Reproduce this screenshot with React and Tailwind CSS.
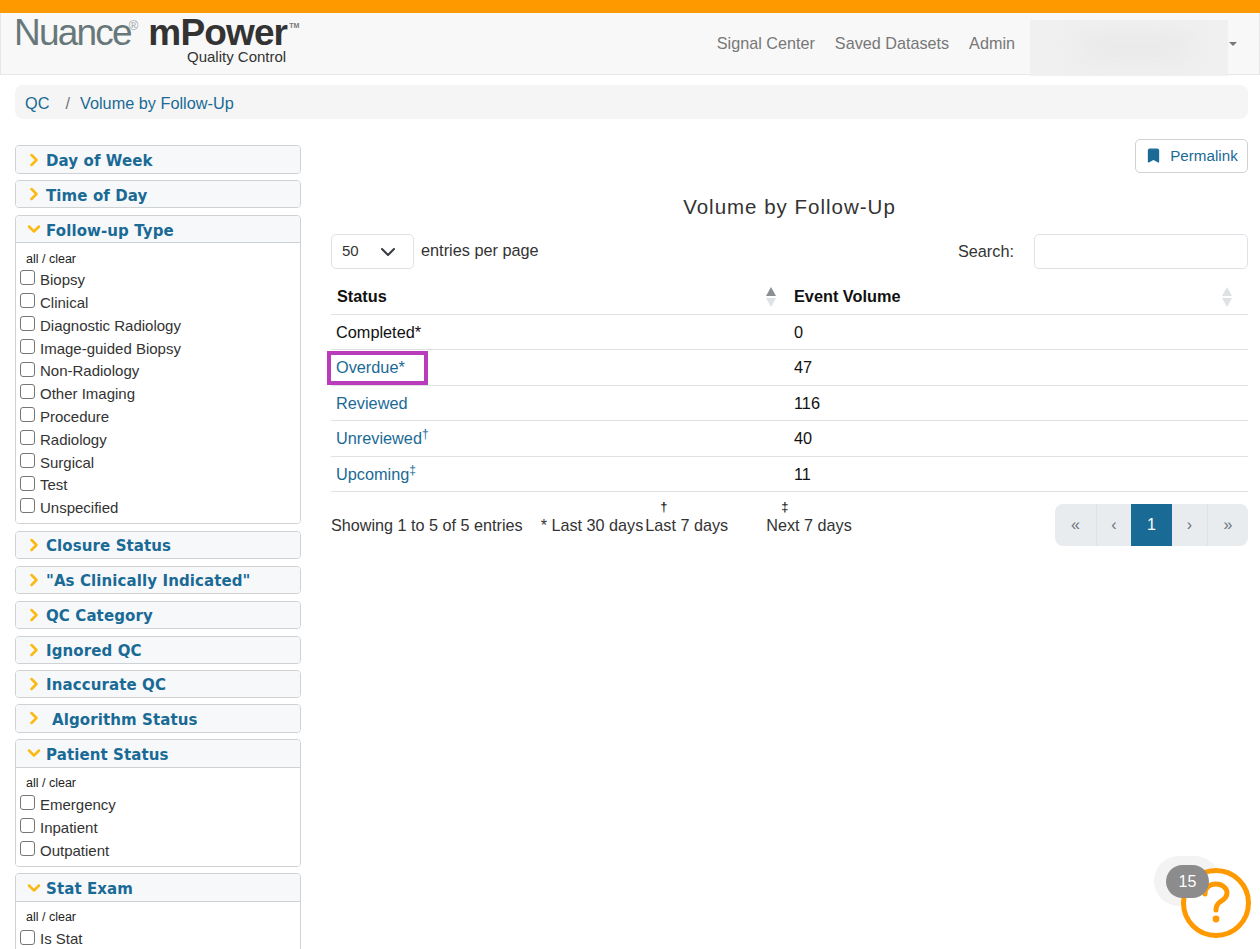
import { ChevronRight, ChevronDown, Bookmark } from "lucide-react";

const sans = "font-['Liberation_Sans',Arial,sans-serif]";

function FilterPanel({ title, open, items, h = "h-[26px]", indent = false, mb = "mb-[7px]", body = "pt-[8px] pb-[3px]", allMb = "mb-[2px]" }) {
  return (
    <div className={`border border-[#cfd2d4] rounded-[4px] ${mb} overflow-hidden`}>
      <div className={`${h} flex items-center bg-[#f7f8fa] pl-[8px]`}>
        {open ? (
          <ChevronDown className="w-[20px] h-[20px] text-[#fdb913]" strokeWidth={3} />
        ) : (
          <ChevronRight className="w-[20px] h-[20px] text-[#fdb913]" strokeWidth={3} />
        )}
        <span
          className={`${indent ? "ml-[8px]" : "ml-[2px]"} mt-[4px] font-['DejaVu_Sans',Verdana,sans-serif] font-bold text-[15px] text-[#1a6a96] leading-none tracking-[0.1px]`}
        >
          {title}
        </span>
      </div>
      {open && (
        <div className={`border-t border-[#cfd2d4] bg-white ${body} pl-[4px]`}>
          <div className={`text-[12.5px] leading-[16px] text-[#222] pl-[6px] ${allMb}`}>all / clear</div>
          {items.map((item) => (
            <label key={item} className="flex items-center h-[22.8px] text-[15px] text-[#333]">
              <input
                type="checkbox"
                className="appearance-none w-[15px] h-[15px] border border-[#767676] rounded-[3px] bg-white mb-[5px]"
              />
              <span className="ml-[5px]">{item}</span>
            </label>
          ))}
        </div>
      )}
    </div>
  );
}

function SortArrows({ active }) {
  return (
    <svg width="12" height="22" viewBox="0 0 12 22" className="shrink-0">
      <path d="M6 1 L11 10 L1 10 Z" fill={active ? "#8a8f94" : "#dfe2e5"} />
      <path d="M6 21 L11 12 L1 12 Z" fill="#dfe2e5" />
    </svg>
  );
}

const rows = [
  { status: "Completed", sup: "*", link: false, volume: "0", h: "h-[35px] pt-[1px]" },
  { status: "Overdue", sup: "*", link: true, volume: "47", h: "h-[36px]" },
  { status: "Reviewed", sup: "", link: true, volume: "116", h: "h-[35px] pt-[1px]" },
  { status: "Unreviewed", sup: "†", link: true, volume: "40", h: "h-[36px]" },
  { status: "Upcoming", sup: "‡", link: true, volume: "11", h: "h-[35px] pt-[1px]" },
];

function Pagination() {
  const pages = [
    { label: "«", w: "w-[41px]" },
    { label: "‹", w: "w-[35px]" },
    { label: "1", w: "w-[41px]", active: true },
    { label: "›", w: "w-[35px]" },
    { label: "»", w: "w-[41px]" },
  ];
  return (
    <div className="flex h-[42px] rounded-[8px] overflow-hidden bg-[#e9ecef] mt-[12px]">
      {pages.map((p, i) => (
        <div
          key={i}
          className={`${p.w} flex items-center justify-center text-[16px] ${
            p.active
              ? "bg-[#1a6a96] text-white"
              : `text-[#6c757d] ${i === 1 || i === 4 ? "border-l border-[#dee2e6]" : ""}`
          }`}
        >
          {p.label}
        </div>
      ))}
    </div>
  );
}

export default function App() {
  return (
    <div className={`relative w-[1260px] h-[949px] overflow-hidden bg-white ${sans}`}>
      <div className="h-[13px] bg-[#ff9900]" />

      {/* Navbar */}
      <div className="h-[62px] flex items-start bg-[#f8f8f8] border-x border-b border-[#e7e7e7] pl-[13px] pr-[22px]">
        <div className="relative w-[301px] h-[60px]">
          <div className="flex items-start leading-[32px] whitespace-nowrap pt-[4px]">
            <span className="text-[37px] tracking-[-1.8px] text-[#68787a]">Nuance</span>
            <span className="text-[13px] leading-[13px] text-[#9aa3a5] mt-[2px] -ml-[2px]">®</span>
            <span className="text-[37px] font-bold tracking-[-0.85px] text-[#333] ml-[10px]">mPower</span>
            <span className="text-[7px] leading-[8px] font-bold text-[#777] mt-[5px] ml-[2px]">TM</span>
          </div>
          <div className="absolute left-[173px] top-[37px] text-[15px] leading-[14px] text-[#333] whitespace-nowrap">
            Quality Control
          </div>
        </div>
        <div className="ml-auto flex items-center h-[61px] text-[16.2px] text-[#777]">
          <span>Signal Center</span>
          <span className="ml-[20px]">Saved Datasets</span>
          <span className="ml-[20px]">Admin</span>
          <div className="relative ml-[15px] w-[198px] h-[56px] mt-[5px] -mb-[4px] bg-[#f0f0f0] overflow-hidden">
            <div className="absolute left-[50px] top-[18px] w-[110px] h-[18px] bg-[#e6e6e6] rounded-full blur-md" />
          </div>
          <span className="ml-[1px] w-0 h-0 border-x-[4px] border-x-transparent border-t-[4px] border-t-[#777]" />
        </div>
      </div>

      {/* Breadcrumb */}
      <div className="mx-[15px] w-[1233px] mt-[10px] h-[34px] flex items-center bg-[#f5f5f5] rounded-[8px] pl-[10px] pt-[2px] text-[16.3px]">
        <span className="text-[#1a6a96]">QC</span>
        <span className="ml-[16px] text-[#6c757d]">/</span>
        <span className="ml-[10px] text-[#1a6a96]">Volume by Follow-Up</span>
      </div>

      <div className="flex pl-[15px] pr-[12px]">
        {/* Sidebar */}
        <div className="w-[286px] shrink-0 mt-[26px]">
          <FilterPanel title="Day of Week" h="h-[27px]" mb="mb-[6px]" />
          <FilterPanel title="Time of Day" />
          <FilterPanel
            title="Follow-up Type"
            open
            items={[
              "Biopsy",
              "Clinical",
              "Diagnostic Radiology",
              "Image-guided Biopsy",
              "Non-Radiology",
              "Other Imaging",
              "Procedure",
              "Radiology",
              "Surgical",
              "Test",
              "Unspecified",
            ]}
          />
          <FilterPanel title="Closure Status" />
          <FilterPanel title={'"As Clinically Indicated"'} />
          <FilterPanel title="QC Category" />
          <FilterPanel title="Ignored QC" mb="mb-[6px]" />
          <FilterPanel title="Inaccurate QC" mb="mb-[6px]" />
          <FilterPanel title="Algorithm Status" h="h-[27px]" mb="mb-[6px]" indent />
          <FilterPanel
            title="Patient Status"
            h="h-[27px]"
            mb="mb-[6px]"
            body="pt-[7px] pb-[4px]"
            allMb="mb-[3px]"
            open
            items={["Emergency", "Inpatient", "Outpatient"]}
          />
          <FilterPanel title="Stat Exam" h="h-[27px]" body="pt-[7px] pb-[3px]" allMb="mb-[3px]" open items={["Is Stat"]} />
        </div>

        {/* Main content */}
        <div className="relative w-[917px] ml-[30px]">
          <div className="flex justify-end mt-[20px]">
            <button className="h-[34px] w-[113px] flex items-center justify-center border border-[#cfd2d4] rounded-[5px] bg-white text-[15.2px] text-[#1a6a96]">
              <Bookmark className="w-[17px] h-[17px] fill-[#1a6a96] text-[#1a6a96] mr-[8px] mb-[2px]" />
              Permalink
            </button>
          </div>

          <h2 className="text-center text-[20.5px] leading-[24px] tracking-[1px] text-[#333] mt-[22px]">
            Volume by Follow-Up
          </h2>

          <div className="flex items-center justify-between mt-[15px]">
            <div className="flex items-center text-[16.3px] text-[#333]">
              <div className="w-[83px] h-[35px] flex items-center justify-between border border-[#dee2e6] rounded-[5px] pl-[10px] pr-[17px] text-[15px]">
                50
                <svg width="16" height="16" viewBox="0 0 16 16" fill="none">
                  <path d="M2 5 L8 11 L14 5" stroke="#343a40" strokeWidth="2" strokeLinecap="round" strokeLinejoin="round" />
                </svg>
              </div>
              <span className="ml-[7px] pb-[2px]">entries per page</span>
            </div>
            <div className="flex items-center text-[16.3px] text-[#333]">
              <span className="mr-[20px]">Search:</span>
              <div className="w-[214px] h-[35px] border border-[#dee2e6] rounded-[5px]" />
            </div>
          </div>

          {/* Table */}
          <div className="mt-[10px] text-[16.3px] text-[#111]">
            <div className="flex h-[36px] border-b border-[#dfe1e3] font-bold">
              <div className="w-[458px] flex items-center justify-between pl-[6px] pr-[12px]">
                Status
                <SortArrows active />
              </div>
              <div className="flex-1 flex items-center justify-between pl-[5px] pr-[15px]">
                Event Volume
                <SortArrows />
              </div>
            </div>
            {rows.map((r) => (
              <div key={r.status} className={`flex items-center ${r.h} border-b border-[#dfe1e3]`}>
                <div className={`w-[458px] pl-[5px] ${r.link ? "text-[#1a6a96]" : "text-[#111]"}`}>
                  {r.status}
                  {r.sup === "*" ? r.sup : <sup className="text-[12px]">{r.sup}</sup>}
                </div>
                <div className="pl-[5px]">{r.volume}</div>
              </div>
            ))}
          </div>

          {/* Highlight around the Overdue link */}
          <div className="absolute left-[-4px] top-[232px] w-[101px] h-[34px] border-[4px] border-[#b93cba]" />

          {/* Table footer */}
          <div className="flex items-start justify-between text-[#333]">
            <div className="flex items-start mt-[8px] text-[16.2px] whitespace-nowrap">
              <span className="mt-[13px]">Showing 1 to 5 of 5 entries</span>
              <span className="ml-[18px] mt-[13px]">* Last 30 days</span>
              <div className="ml-[2px] w-[121px] flex flex-col">
                <span className="text-[13px] leading-[13px] pl-[15px] text-black">†</span>
                <span>Last 7 days</span>
              </div>
              <div className="flex flex-col">
                <span className="text-[13px] leading-[13px] pl-[15px] text-black">‡</span>
                <span>Next 7 days</span>
              </div>
            </div>
            <Pagination />
          </div>
        </div>
      </div>

      {/* Help widget */}
      <div className="absolute left-[1154px] top-[856px] w-[66px] h-[50px] rounded-full bg-[#f3f3f3]" />
      <div className="absolute left-[1181px] top-[868px] w-[70px] h-[70px] rounded-full border-[5px] border-[#ff9900] bg-white flex items-center justify-center">
        <svg width="30" height="44" viewBox="0 0 30 44" fill="none">
          <path
            d="M4 13 C4 6 9 3 15 3 C21 3 26 7 26 12 C26 17 22 19 19 21 C16 23 15 25 15 29"
            stroke="#ff9900"
            strokeWidth="5"
            strokeLinecap="round"
          />
          <circle cx="15" cy="38" r="3.4" fill="#ff9900" />
        </svg>
      </div>
      <div className="absolute left-[1166px] top-[865px] w-[43px] h-[33px] rounded-full bg-[#8c8c8c] flex items-center justify-center text-[16px] text-white">
        15
      </div>
    </div>
  );
}
